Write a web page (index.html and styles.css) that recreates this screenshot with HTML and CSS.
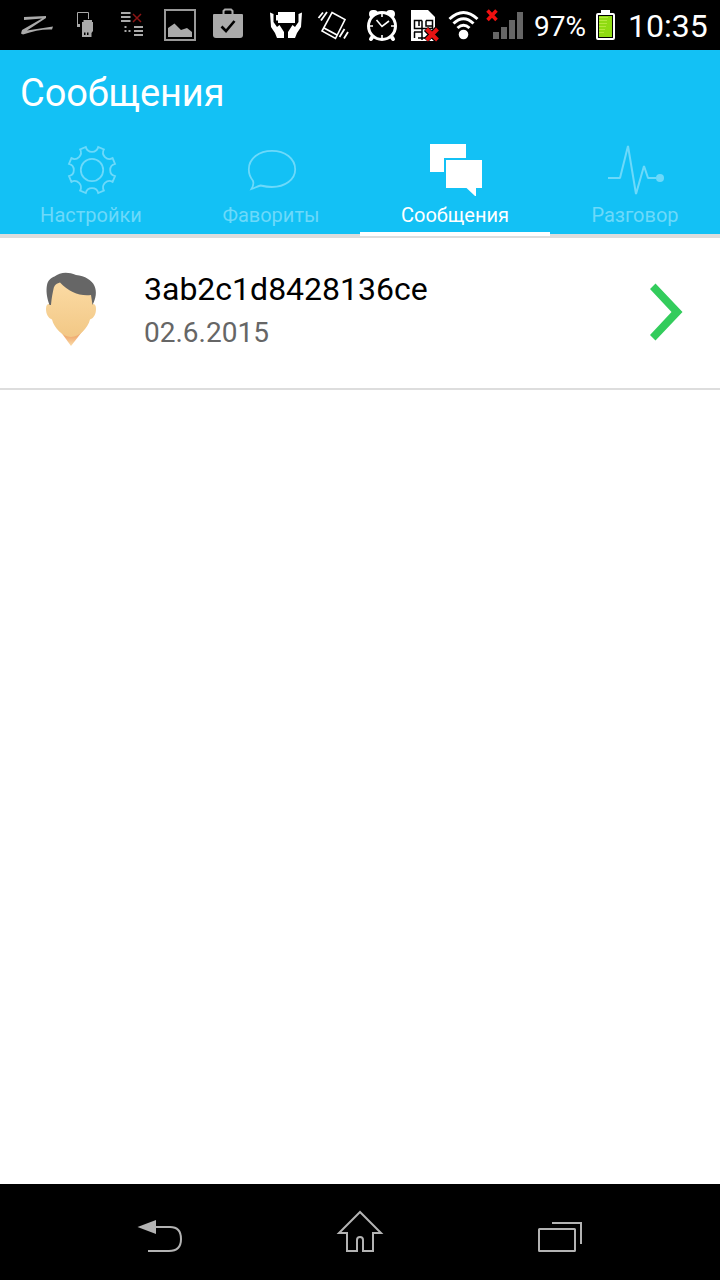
FILE: index.html
```
<!DOCTYPE html>
<html lang="ru">
<head>
    <meta charset="UTF-8">
    <meta name="viewport" content="width=device-width, initial-scale=1.0">
    <title>Сообщения</title>
    <link rel="stylesheet" href="styles.css">
</head>
<body>

<div class="screen">
    <div class="status-bar">
        <div class="notifications">
            <svg width="48" height="50" viewBox="12 0 48 50">
                <path fill="#aaa" d="M24 17L46 16L46 18L27 30.500L53 26.500L52 29.500C43 29 33 31 23 34.500L21 33.500L22 30L42 18.500L24 20Z"/>
            </svg>
            <svg width="48" height="50" viewBox="60 0 48 50">
                <path fill="none" stroke="#aaa" d="M80 26.500H77.500V12.500H88.500V19"/>
                <path fill="#aaa" d="M77 24h3v3h-3zM83.500 20h8.500v2h1v9l-1.500 2v4H82V22h1.500z"/>
                <path fill="#000" d="M84 32.500h1.500v2.500H84zM87 32.500h1.500v2.500H87z"/>
            </svg>
            <svg width="48" height="50" viewBox="108 0 48 50">
                <path fill="#aaa" d="M121 12h9.500v2H121zM121 16h9.500v2H121zM121 20h9.500v2H121zM134 26h9v2h-9zM134 30h9v2h-9zM134 34h9v2h-9zM124.500 26h2v2h-2zM124.500 30h2v2h-2zM128.500 30h2v2h-2z"/>
                <path stroke="#8c1515" stroke-width="1.500" d="M133 14l8 8M141 14l-8 8"/>
            </svg>
            <svg width="48" height="50" viewBox="156 0 48 50">
                <path fill="none" stroke="#999" stroke-width="2" d="M165 10h30v30h-30z"/>
                <path fill="#aaa" d="M168 37V28L174.500 23.500L181 30L187 28L192 32V37Z"/>
            </svg>
            <svg width="48" height="50" viewBox="204 0 48 50">
                <path fill="#aaa" d="M213 15q0-1 1-1H242q1 0 1 1V35q0 3-3 3H216q-3 0-3-3z"/>
                <path fill="none" stroke="#aaa" stroke-width="2" d="M223.500 14.500V11l1.500-1.500h6l1.500 1.500V14.500"/>
                <path fill="none" stroke="#000" stroke-width="2.600" d="M221.500 26.500L226 31L234.500 21"/>
            </svg>
        </div>
        <div class="system">
            <svg width="48" height="50" viewBox="262 0 48 50">
                <path fill="#fff" d="M278 12h17v11h-17v-2.500h-2v-5.500h2zM270 12.500L273.500 14V22L277 27L279.500 25L284 32V38H277L275 33L271 27ZM302 12.500L298.500 14V22L295 27L292.500 25L288 32V38H295L297 33L301 27Z"/>
            </svg>
            <svg width="48" height="50" viewBox="310 0 48 50">
                <path fill="none" stroke="#fff" stroke-width="1.600" d="M332 12.500L345 19.500L335.500 38.500L322 31Z"/>
                <path stroke="#fff" stroke-width="1.800" d="M324 28L337 35M323 12.500L318.500 18M327 12L321 20.500M348 32L344 38.500M344.500 29L339.500 37"/>
            </svg>
            <svg width="48" height="50" viewBox="358 0 48 50">
                <path stroke="#fff" stroke-width="8" stroke-linecap="round" d="M373 14h1M390 14h1"/>
                <path stroke="#fff" stroke-width="4" stroke-linecap="round" d="M373 36l-2 3M391 36l2 3"/>
                <circle cx="382" cy="26" r="13.500" fill="#000" stroke="#fff" stroke-width="3"/>
                <path fill="none" stroke="#fff" stroke-width="1.600" d="M376.500 20L382 26.500L389 21M382 14v3M382 35v3M370 26h3M391 26h3"/>
            </svg>
            <svg width="36" height="50" viewBox="406 0 36 50">
                <path fill="#fff" d="M411 10H428L435 17V41H411Z"/>
                <path fill="none" stroke="#000" stroke-width="1.500" d="M422 20.500H414.500V28.500H422M426 20.500H432.500V28.500H420M419 20.500V26M422 20.500V40M426 20.500V26H432M414 32H422M414.500 32V38M418 38H426"/>
                <path stroke="#000" stroke-width="6" d="M426 29l11 11M437 29l-11 11"/>
                <path stroke="#e81313" stroke-width="4" d="M426.500 29l11 11M437.500 29l-11 11"/>
            </svg>
            <svg width="42" height="50" viewBox="442 0 42 50">
                <g fill="none" stroke="#fff" stroke-width="3">
                    <path d="M449.500 19Q463.500 6 477.500 19M453.500 23.500Q463.500 14 473.500 23.500M457.500 28Q463.500 22.500 469.500 28"/>
                </g>
                <circle cx="463.500" cy="34.500" r="4.800" fill="#fff"/>
            </svg>
            <svg width="42" height="50" viewBox="484 0 42 50">
                <path fill="#666" d="M493 32h6v7h-6zM501 27h6v12h-6zM509 20h6v19h-6zM517 12h6v27h-6z"/>
                <path stroke="#f01010" stroke-width="3.500" d="M487.500 10.500l9 9.500M496.500 10.500l-9 9.500"/>
            </svg>
        </div>
        <span class="percent">97%</span>
        <svg class="battery" width="20" height="50" viewBox="596 0 20 50">
            <path fill="#fff" d="M601 10h9v3h3q2 0 2 2v23q0 2-2 2H598q-2 0-2-2V15q0-2 2-2h3z"/>
            <path fill="#000" d="M598 15h15v23h-15z"/>
            <path fill="#8fdb12" d="M599 16h13v21h-13z"/>
            <path fill="#b4e83c" d="M599 17h9v1h-9zM599 20h8v1h-8zM599 23h8v1h-8zM599 26h7v1h-7zM599 29h6v1h-6zM599 32h5v1h-5z"/>
        </svg>
        <span class="clock">10:35</span>
    </div>

    <header class="header">
        <h1>Сообщения</h1>
        <nav class="tabs">
            <a class="tab settings">
                <svg width="64" height="64" viewBox="-32 -32 64 64" fill="none" stroke="currentColor" stroke-width="1.800">
                    <path d="M-6.200-23A6.400 6.400 0 0 0 6.200-23L11.900-20.600A6.400 6.400 0 0 0 20.600-11.900L23-6.200A6.400 6.400 0 0 0 23 6.200L20.600 11.900A6.400 6.400 0 0 0 11.900 20.600L6.200 23A6.400 6.400 0 0 0-6.200 23L-11.900 20.600A6.400 6.400 0 0 0-20.600 11.900L-23 6.200A6.400 6.400 0 0 0-23-6.200L-20.600-11.900A6.400 6.400 0 0 0-11.900-20.600Z"/>
                    <circle r="11.200"/>
                </svg>
                <span>Настройки</span>
            </a>
            <a class="tab favorites">
                <svg width="64" height="64" viewBox="240 138 64 64" fill="none" stroke="currentColor" stroke-width="1.800">
                    <path d="M251.500 189C253.500 185.500 253.800 182.500 252.800 180.500C250 177 248.800 174 248.800 169.500C248.800 158.500 259 150.800 272 150.800C285 150.800 295.200 158.500 295.200 169.500C295.200 179.500 285 187 272 187C267.500 187 263.500 186.200 260.500 185.500C257.500 186.200 254.500 188 251.500 189Z"/>
                </svg>
                <span>Фавориты</span>
            </a>
            <a class="tab messages active">
                <svg width="64" height="64" viewBox="424 138 64 64" fill="currentColor">
                    <path d="M430 144H466V158H444V172H430ZM446 160H482V188H476V196H475L466.500 188H446Z"/>
                </svg>
                <span>Сообщения</span>
            </a>
            <a class="tab talk">
                <svg width="64" height="64" viewBox="604 138 64 64" fill="none" stroke="currentColor" stroke-width="2">
                    <path stroke-linejoin="bevel" d="M608 178H620L628 146L636 194L644 166L648 178H656"/>
                    <circle cx="660" cy="178" r="4" fill="currentColor" stroke="none"/>
                </svg>
                <span>Разговор</span>
            </a>
        </nav>
    </header>

    <main class="list">
        <div class="item">
            <svg class="avatar" width="52" height="76" viewBox="45 271 52 76">
                <defs>
                    <linearGradient id="skin" x1="0" y1="0" x2="0" y2="1">
                        <stop offset="0" stop-color="#fcdca6"/>
                        <stop offset="1" stop-color="#f2c886"/>
                    </linearGradient>
                    <linearGradient id="neck" x1="0" y1="0" x2="0" y2="1">
                        <stop offset="0.500" stop-color="#f0ae74"/>
                        <stop offset="1" stop-color="#fbdca8"/>
                    </linearGradient>
                </defs>
                <path fill="url(#neck)" d="M58 328L71 346L85 328Z"/>
                <path fill="url(#skin)" d="M49 304Q46 304 46 309C46 314 48 318 52 319.500C54 328 63 337 71 337C79 337 88 328 90 319.500C94 318 96 314 96 309Q96 304 93 304L92 290L60 278L51 290Z"/>
                <path fill="#666" d="M49.500 305C46.500 297 46 290 47 285C48 280 51 278 54.500 276.500C60 272 68 271.500 76 275C85 276 92 280 94.500 286C97 292 96 298 92.500 305L91 295C80 296.500 69 292 60 282.500C56 283.500 54.500 285 53.500 289C52 296 51.500 300 51 305Z"/>
            </svg>
            <div class="info">
                <div class="name">3ab2c1d8428136ce</div>
                <div class="date">02.6.2015</div>
            </div>
            <svg class="arrow" width="34" height="58" viewBox="649 283 34 58">
                <path fill="#33cc5c" d="M655.500 283.500L650 289L671.500 312L650 335L655.500 340.500L682.500 312Z"/>
            </svg>
        </div>
    </main>

    <footer class="nav-bar">
        <svg width="200" height="96" viewBox="60 1184 200 96">
            <path fill="#b3b3b3" d="M137.500 1227L156 1220V1234Z"/>
            <path fill="none" stroke="#b3b3b3" stroke-width="2" d="M156 1227H170C178 1227 181 1231 181 1239C181 1247 177 1251 169 1251H148"/>
        </svg>
        <svg width="200" height="96" viewBox="260 1184 200 96">
            <path fill="none" stroke="#b3b3b3" stroke-width="2" d="M360 1212L339 1233H347V1251H357V1240Q357 1237 360 1237Q363 1237 363 1240V1251H373V1233H381Z"/>
        </svg>
        <svg width="200" height="96" viewBox="460 1184 200 96">
            <rect x="539" y="1229" width="36" height="22" rx="0.500" fill="none" stroke="#b3b3b3" stroke-width="2"/>
            <path fill="none" stroke="#b3b3b3" stroke-width="2" d="M552 1223H581V1244"/>
        </svg>
    </footer>
</div>

</body>
</html>
```
FILE: styles.css
```
body {
    margin: 0;
    font-family: Roboto, sans-serif;
    background: #fff;
}
svg {
    display: block;
    flex-shrink: 0;
}
.screen {
    display: flex;
    flex-direction: column;
    width: 720px;
    height: 1280px;
}
.status-bar {
    display: flex;
    align-items: center;
    box-sizing: border-box;
    height: 50px;
    padding-left: 12px;
    background: #000;
    color: #fff;
    line-height: 50px;
    white-space: nowrap;
}
.notifications, .system {
    display: flex;
}
.system {
    margin-left: 10px;
}
.percent {
    width: 62px;
    padding-left: 8px;
    box-sizing: border-box;
    font-size: 28px;
    padding-top: 3px;
}
.battery {
    margin-left: 8px;
}
.clock {
    margin-left: 12px;
    font-size: 32px;
    padding-top: 2px;
}
.header {
    height: 184px;
    background: #13c1f5;
    border-bottom: 4px solid #ddd;
    color: #fff;
}
h1 {
    margin: 0;
    padding: 0 20px;
    height: 88px;
    line-height: 86px;
    font-size: 38px;
    font-weight: 400;
    letter-spacing: -0.1px;
}
.tabs {
    display: grid;
    grid-template-columns: 182px 178px 190px 170px;
}
.tab {
    display: flex;
    flex-direction: column;
    align-items: center;
    box-sizing: border-box;
    height: 98px;
    color: #6cd9fa;
    font-size: 20px;
    line-height: 26px;
}
.tab svg {
    margin-left: 2px;
}
.tab.active {
    color: #fff;
    border-bottom: 4px solid #fff;
}
.list {
    flex: 1;
}
.item {
    display: flex;
    align-items: flex-start;
    box-sizing: border-box;
    height: 152px;
    padding: 33px 37px 0 45px;
    border-bottom: 2px solid #ddd;
}
.info {
    flex: 1;
    margin-left: 47px;
}
.name {
    font-size: 32px;
    line-height: 36px;
    color: #000;
}
.date {
    font-size: 28px;
    line-height: 34px;
    margin-top: 9px;
    color: #666;
}
.arrow {
    margin-top: 12px;
}
.nav-bar {
    display: flex;
    justify-content: center;
    height: 96px;
    background: #000;
}
```
